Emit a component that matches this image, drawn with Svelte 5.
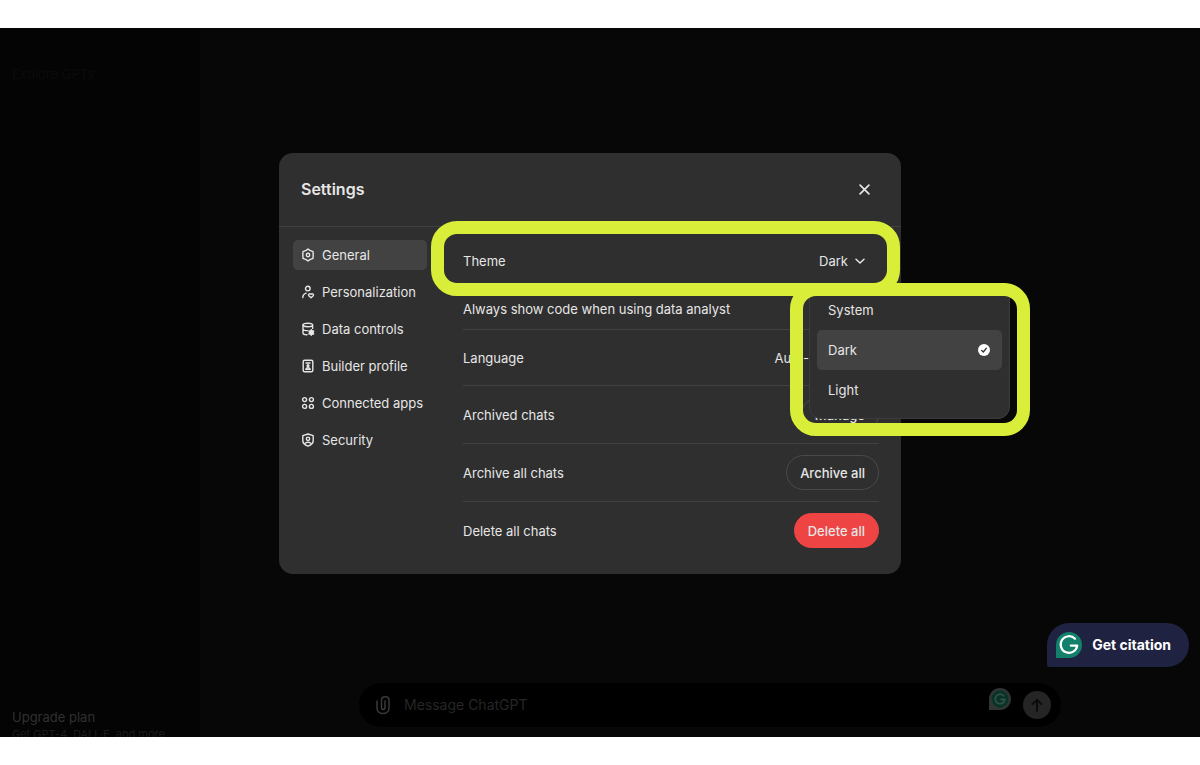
<script lang="ts">
  const tabs = [
    { id: "general", label: "General" },
    { id: "personalization", label: "Personalization" },
    { id: "data", label: "Data controls" },
    { id: "builder", label: "Builder profile" },
    { id: "apps", label: "Connected apps" },
    { id: "security", label: "Security" },
  ];

  const themes = ["System", "Dark", "Light"];

  let activeTab = $state("general");
  let theme = $state("Dark");
  let language = $state("Auto-detect");
  let message = $state("");
</script>

{#snippet chevron()}
  <svg class="chevron" viewBox="0 0 10 10" aria-hidden="true">
    <path d="M1 3.2 L5 7 L9 3.2" />
  </svg>
{/snippet}

{#snippet tabIcon(id: string)}
  <svg class="tab-icon" viewBox="0 0 14 14" aria-hidden="true">
    {#if id === "general"}
      <path d="M7 1 L8.9 2.4 L12 3.6 L12.2 7 L12 10.4 L8.9 11.6 L7 13 L5.1 11.6 L2 10.4 L1.8 7 L2 3.6 L5.1 2.4 Z" />
      <circle cx="7" cy="7" r="1.7" />
    {:else if id === "personalization"}
      <circle cx="6.8" cy="3.6" r="2.3" />
      <path d="M1.8 12.6 C1.9 10.2 3 8.6 5.2 8.1" />
      <path d="M10 12.8 L7.8 10.8 C6.8 9.5 8.6 7.9 10 9.2 C11.4 7.9 13.2 9.5 12.2 10.8 Z" />
    {:else if id === "data"}
      <ellipse cx="6.8" cy="3" rx="4.8" ry="1.8" />
      <path d="M2 3 V11 C2 12.2 4 12.8 6 12.8 M11.6 3 V6.4 M2 7 C2.2 8.2 4.4 8.8 6.6 8.6" />
      <circle class="solid" cx="10.3" cy="10.4" r="1.9" />
      <path d="M10.3 7.6 V13.2 M7.9 9 L12.7 11.8 M12.7 9 L7.9 11.8" />
    {:else if id === "builder"}
      <rect x="2.2" y="1.2" width="9.6" height="11.6" rx="1.4" />
      <path d="M5 4 H9 M4.8 10.2 H9.2" />
      <circle class="solid" cx="7" cy="6.7" r="0.9" />
      <path d="M5.2 10 C5.4 8.4 8.6 8.4 8.8 10" />
    {:else if id === "apps"}
      <circle cx="3.6" cy="3.6" r="2" />
      <circle cx="10.4" cy="3.6" r="2" />
      <circle cx="3.6" cy="10.4" r="2" />
      <circle cx="10.4" cy="10.4" r="2" />
    {:else}
      <path d="M7 1 L12.2 2.6 V7.4 C12.2 10.2 10 12 7 13.1 C4 12 1.8 10.2 1.8 7.4 V2.6 Z" />
      <circle cx="7" cy="5.8" r="1.7" />
      <path d="M4 10.4 C5 8.8 9 8.8 10 10.4" />
    {/if}
  </svg>
{/snippet}

<div class="screen">
  <aside class="sidebar">
    <a class="explore" href="#gpts">Explore GPTs</a>
    <a class="upgrade" href="#upgrade">
      <span>Upgrade plan</span>
      <small>Get GPT-4, DALL·E, and more</small>
    </a>
  </aside>

  <main class="chat">
    <form class="composer">
      <button type="button" class="attach" aria-label="Attach file">
        <svg viewBox="0 0 16 20" aria-hidden="true">
          <path d="M2 6 V13 C2 20.400 14 20.400 14 13 V5 C14 0.600 6.500 0.600 6.500 5 V12.500 C6.500 15 10 15 10 12.500 V6" />
        </svg>
      </button>
      <input type="text" placeholder="Message ChatGPT" aria-label="Message" bind:value={message} />
      <svg class="grammarly-dim" viewBox="0 0 22 22" aria-hidden="true">
        <path class="rim" d="M11 0 A11 11 0 0 1 11 22 H0 V11 A11 11 0 0 1 11 0 Z" />
        <circle class="disc" cx="11" cy="11" r="8.400" />
        <path class="g" d="M14.600 7.800 A4.800 4.800 0 1 0 15.800 11.400 H12" />
      </svg>
      <button type="button" class="send" aria-label="Send message">
        <svg viewBox="0 0 14 14" aria-hidden="true">
          <path d="M7 13 V2 M2.500 6.200 L7 1.800 L11.500 6.200" />
        </svg>
      </button>
    </form>
  </main>

  <div class="overlay">
    <div class="modal" role="dialog" aria-labelledby="settings-title">
      <header class="modal-header">
        <h2 id="settings-title">Settings</h2>
        <button type="button" class="close" aria-label="Close">
          <svg viewBox="0 0 10 10" aria-hidden="true">
            <path d="M1 1 L9 9 M9 1 L1 9" />
          </svg>
        </button>
      </header>

      <div class="modal-body">
        <nav class="tabs">
          {#each tabs as tab}
            <button
              type="button"
              class="tab"
              class:active={activeTab === tab.id}
              onclick={() => (activeTab = tab.id)}
            >
              {@render tabIcon(tab.id)}
              {tab.label}
            </button>
          {/each}
        </nav>

        <div class="rows">
          <div class="row theme-row">
            <label for="theme">Theme</label>
            <div class="select-wrap">
              <select id="theme" bind:value={theme}>
                {#each themes as name}
                  <option>{name}</option>
                {/each}
              </select>
              {@render chevron()}
            </div>
            <div class="marker row-marker"></div>

            <div class="menu" role="listbox" aria-label="Theme">
              {#each themes as name}
                <button
                  type="button"
                  class="option"
                  class:selected={theme === name}
                  role="option"
                  aria-selected={theme === name}
                  onclick={() => (theme = name)}
                >
                  {name}
                  {#if theme === name}
                    <svg class="check" viewBox="0 0 12 12" aria-hidden="true">
                      <circle cx="6" cy="6" r="6" />
                      <path d="M3.600 6.400 L5.300 8 L8.400 4.200" />
                    </svg>
                  {/if}
                </button>
              {/each}
              <div class="marker menu-marker"></div>
            </div>
          </div>

          <div class="row code-row">
            <span>Always show code when using data analyst</span>
          </div>

          <div class="row">
            <label for="language">Language</label>
            <div class="select-wrap">
              <select id="language" bind:value={language}>
                <option>Auto-detect</option>
                <option>English</option>
              </select>
              {@render chevron()}
            </div>
          </div>

          <div class="row">
            <span>Archived chats</span>
            <button type="button" class="pill">Manage</button>
          </div>

          <div class="row">
            <span>Archive all chats</span>
            <button type="button" class="pill">Archive all</button>
          </div>

          <div class="row">
            <span>Delete all chats</span>
            <button type="button" class="pill danger">Delete all</button>
          </div>
        </div>
      </div>
    </div>
  </div>

  <button type="button" class="citation">
    <svg viewBox="0 0 26 26" aria-hidden="true">
      <path class="disc" d="M13 0 A13 13 0 0 1 13 26 H0 V13 A13 13 0 0 1 13 0 Z" />
      <path class="g" d="M19 6.800 A8.300 8.300 0 1 0 21.200 13.600 H14.800" />
    </svg>
    Get citation
  </button>
</div>

<style>
  :global(body) {
    background: #fff;
    font-family: Inter, "Liberation Sans", sans-serif;
    font-size: 13px;
    line-height: 20px;
  }

  button,
  input,
  select {
    margin: 0;
    padding: 0;
    border: 0;
    background: none;
    color: inherit;
    font: inherit;
  }

  svg {
    display: block;
    flex: none;
    fill: none;
    stroke: currentColor;
    stroke-linecap: round;
    stroke-linejoin: round;
  }

  .screen {
    position: relative;
    display: flex;
    height: calc(100vh - 56px);
    min-height: 600px;
    margin: 28px 0;
    background: #070707;
    color: #e6e6e6;
    overflow: hidden;
  }

  /* dimmed page behind the dialog */
  .sidebar {
    display: flex;
    flex-direction: column;
    justify-content: space-between;
    box-sizing: border-box;
    width: 200px;
    padding: 36px 12px 0;
    background: #040404;
  }

  .sidebar a {
    text-decoration: none;
    white-space: nowrap;
  }

  .explore {
    color: #0b0b0b;
  }

  .upgrade {
    display: flex;
    flex-direction: column;
    margin-bottom: -4px;
    color: #303030;
  }

  .upgrade small {
    font-size: 11px;
    line-height: 14px;
    color: #1c1c1c;
  }

  .chat {
    display: flex;
    flex: 1;
    align-items: flex-end;
    justify-content: center;
    padding: 0 0 10px 20px;
  }

  .composer {
    display: flex;
    align-items: center;
    box-sizing: border-box;
    width: 100%;
    max-width: 702px;
    height: 44px;
    padding: 0 10px 0 16px;
    border-radius: 22px;
    background: #000;
  }

  .attach {
    color: #3a3a3a;
  }

  .attach svg {
    width: 16px;
    height: 20px;
    stroke-width: 1.5;
  }

  .composer input {
    flex: 1;
    min-width: 0;
    padding-left: 13px;
    font-size: 14px;
    outline: none;
  }

  .composer input::placeholder {
    color: #262626;
    opacity: 1;
  }

  .grammarly-dim {
    width: 22px;
    height: 22px;
    margin: 0 12px 12px 0;
    stroke: none;
  }

  .grammarly-dim .rim {
    fill: #2e3533;
  }

  .grammarly-dim .disc {
    fill: #0a3328;
  }

  .grammarly-dim .g {
    stroke: #34524a;
    stroke-width: 1.6;
  }

  .send {
    display: grid;
    place-items: center;
    width: 28px;
    height: 28px;
    border-radius: 50%;
    background: #252525;
    color: #0a0a0a;
  }

  .send svg {
    width: 14px;
    height: 14px;
    stroke-width: 1.8;
  }

  /* dialog */
  .overlay {
    position: absolute;
    inset: 0;
    display: flex;
    align-items: flex-start;
    justify-content: center;
    padding: 125px 20px 0 0;
  }

  .modal {
    width: 100%;
    max-width: 622px;
    border-radius: 14px;
    background: #2f2f2f;
  }

  .modal-header {
    display: flex;
    align-items: center;
    justify-content: space-between;
    padding: 24px 30px 24px 22px;
    border-bottom: 1px solid #414141;
  }

  h2 {
    margin: 0;
    font-size: 16px;
    line-height: 25px;
    font-weight: 600;
  }

  .close svg {
    width: 11px;
    height: 11px;
    margin-right: 1px;
    stroke-width: 1.5;
  }

  .modal-body {
    display: flex;
    gap: 36px;
    padding: 6px 22px 15px 14px;
  }

  .tabs {
    display: flex;
    flex-direction: column;
    gap: 7px;
    width: 134px;
    padding-top: 7px;
  }

  .tab {
    display: flex;
    align-items: center;
    gap: 7px;
    height: 30px;
    padding: 0 8px;
    border-radius: 5px;
    white-space: nowrap;
  }

  .tab.active {
    background: #424242;
  }

  .tab-icon {
    width: 14px;
    height: 14px;
    stroke-width: 1.4;
  }

  .tab-icon .solid {
    fill: currentColor;
  }

  .rows {
    flex: 1;
  }

  .row {
    display: flex;
    align-items: center;
    justify-content: space-between;
    box-sizing: border-box;
    min-height: 56px;
    padding: 11px 0;
    border-bottom: 1px solid #414141;
  }

  .row:last-child {
    border-bottom: 0;
  }

  .theme-row {
    position: relative;
  }

  .code-row {
    min-height: 41px;
    padding: 9px 0;
  }

  .select-wrap {
    display: flex;
    align-items: center;
    gap: 7px;
    padding-right: 14px;
  }

  select {
    appearance: none;
    text-align-last: right;
  }

  .chevron {
    width: 10px;
    height: 10px;
    stroke-width: 1.5;
  }

  .pill {
    box-sizing: border-box;
    height: 35px;
    padding: 0 13px;
    border: 1px solid #4a4a4a;
    border-radius: 18px;
    font-weight: 500;
  }

  .danger {
    border-color: #ef4444;
    background: #ef4444;
  }

  .menu {
    position: absolute;
    top: 52px;
    right: -131px;
    z-index: 1;
    box-sizing: border-box;
    width: 201px;
    padding: 4px 7px 8px;
    border: 1px solid #3c3c3c;
    border-radius: 12px;
    background: #2f2f2f;
  }

  .option {
    display: flex;
    align-items: center;
    justify-content: space-between;
    box-sizing: border-box;
    width: 100%;
    height: 40px;
    padding: 0 12px 0 11px;
    border-radius: 5px;
  }

  .option.selected {
    background: #424242;
  }

  .check {
    width: 12px;
    height: 12px;
  }

  .check circle {
    fill: #fff;
    stroke: none;
  }

  .check path {
    stroke: #2f2f2f;
    stroke-width: 1.3;
  }

  .marker {
    position: absolute;
    border: 13px solid #d9ee38;
    border-radius: 26px;
    pointer-events: none;
  }

  .row-marker {
    inset: -12px -21px -8px -32px;
    z-index: 2;
  }

  .menu-marker {
    inset: -3px -21px -18px -20px;
  }

  .citation {
    position: absolute;
    right: 11px;
    bottom: 70px;
    display: flex;
    align-items: center;
    gap: 10px;
    height: 44px;
    padding: 0 18px 0 9px;
    border-radius: 22px 22px 22px 2px;
    background: #1f2240;
    color: #fff;
    font-size: 14px;
    font-weight: 700;
  }

  .citation svg {
    width: 26px;
    height: 26px;
  }

  .citation .disc {
    fill: #12806a;
    stroke: none;
  }

  .citation .g {
    stroke: #fff;
    stroke-width: 2.2;
  }
</style>
